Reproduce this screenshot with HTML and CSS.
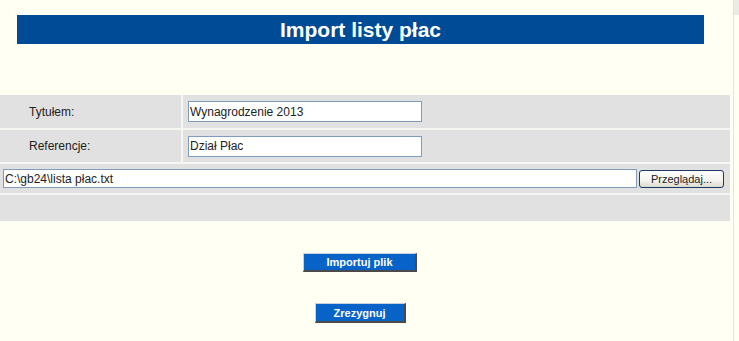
FILE: index.html
```html
<!DOCTYPE html>
<html lang="pl">
<head>
<meta charset="utf-8">
<title>Import listy płac</title>
<link rel="stylesheet" href="styles.css">
</head>
<body>
<div class="page">
  <main class="main">
    <div class="header"><h1 class="title">Import listy płac</h1></div>
    <div class="form">
      <div class="cell label">Tytułem:</div>
      <div class="cell value"><input class="text" type="text" value="Wynagrodzenie 2013"></div>
      <div class="cell label">Referencje:</div>
      <div class="cell value"><input class="text" type="text" value="Dział Płac"></div>
      <div class="cell file">
        <input class="path" type="text" value="C:\gb24\lista płac.txt">
        <button class="browse" type="button">Przeglądaj...</button>
      </div>
      <div class="cell empty"></div>
    </div>
    <div class="actions">
      <button class="action import" type="button">Importuj plik</button>
      <button class="action cancel" type="button">Zrezygnuj</button>
    </div>
  </main>
  <aside class="strip"><div class="strip-top"></div></aside>
</div>
</body>
</html>
```
FILE: styles.css
```css
html, body {
  margin: 0;
  padding: 0;
  background: #fffff3;
  font-family: "Liberation Sans", Arial, sans-serif;
}
.page {
  display: flex;
  width: 739px;
  height: 341px;
  overflow: hidden;
}
.main {
  width: 730px;
  flex: none;
}
.header {
  padding: 15px 26px 0 17px;
}
.title {
  margin: 0;
  height: 29px;
  line-height: 30px;
  background: #004b95;
  color: #ffffff;
  font-size: 21px;
  font-weight: bold;
  text-align: center;
}
.form {
  margin-top: 51px;
  display: grid;
  grid-template-columns: 181px 1fr;
  grid-template-rows: 33px 32px 29px 26px;
  gap: 2px 2px;
  background: #f6f6f3;
}
.cell {
  background: #e1e1e1;
  display: flex;
  align-items: center;
}
.label {
  padding-left: 29px;
  font-size: 12px;
  color: #222222;
}
.value {
  padding-left: 5px;
}
.text {
  box-sizing: border-box;
  width: 234px;
  height: 21px;
  border: 1px solid #7f9db9;
  background: #ffffff;
  font-family: "Liberation Sans", Arial, sans-serif;
  font-size: 12px;
  color: #222222;
  padding: 0 1px;
  margin: 0;
}
.file {
  grid-column: 1 / 3;
  padding-left: 3px;
  gap: 2px;
}
.path {
  box-sizing: border-box;
  width: 634px;
  height: 19px;
  border: 1px solid #7f9db9;
  background: #ffffff;
  font-family: "Liberation Sans", Arial, sans-serif;
  font-size: 12px;
  color: #222222;
  padding: 0 1px;
  margin: 0;
}
.browse {
  box-sizing: border-box;
  width: 85px;
  height: 18px;
  margin: 0;
  padding: 0;
  border: 1px solid #1c3a63;
  border-radius: 3px;
  background: linear-gradient(#ffffff, #f4f3ee 60%, #dcdad0);
  font-family: "Liberation Sans", Arial, sans-serif;
  font-size: 11px;
  color: #222222;
}
.empty {
  grid-column: 1 / 3;
}
.actions {
  width: 720px;
  display: flex;
  flex-direction: column;
  align-items: center;
  padding-top: 32px;
  gap: 31px;
}
.action {
  box-sizing: border-box;
  margin: 0;
  padding: 0;
  background: #0863c9;
  color: #ffffff;
  font-family: "Liberation Sans", Arial, sans-serif;
  font-size: 11px;
  font-weight: bold;
  border-style: solid;
  border-width: 1px 2px 2px 1px;
  border-color: #c8d0dc #4a4a4a #4a4a4a #c8d0dc;
}
.import {
  width: 114px;
  height: 19px;
}
.cancel {
  width: 91px;
  height: 20px;
}
.strip {
  flex: none;
  width: 6px;
  margin-left: 3px;
  border-left: 1px solid #e4e4dc;
}
.strip-top {
  height: 15px;
  background: #ecece6;
}
```
